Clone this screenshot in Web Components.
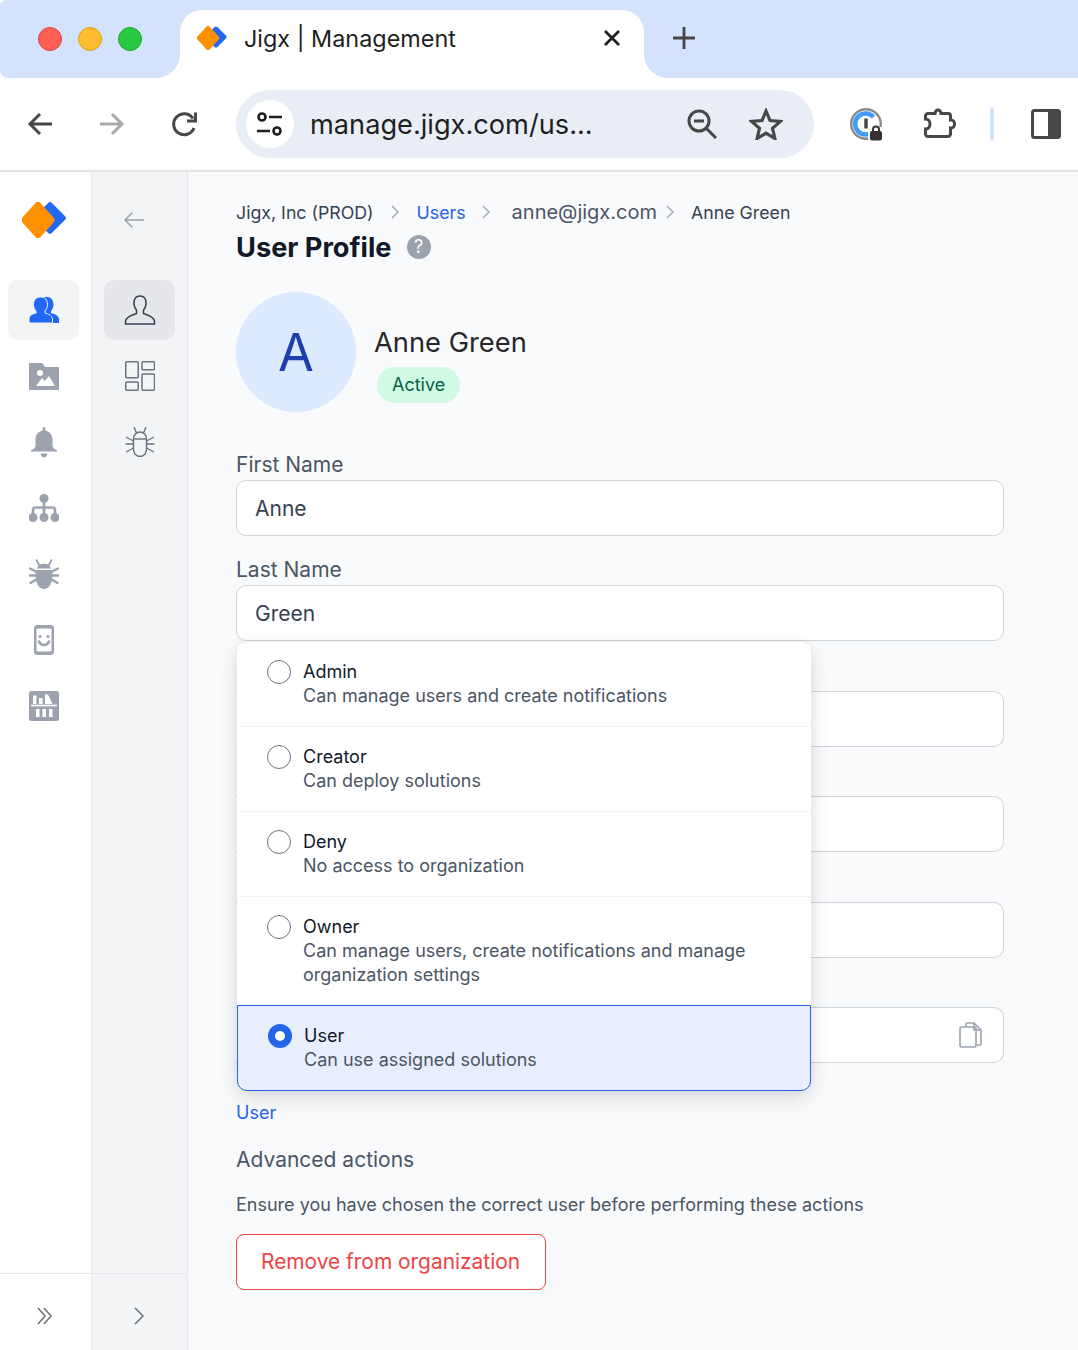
<!DOCTYPE html>
<html lang="en">
<head>
<meta charset="utf-8">
<title>Jigx | Management</title>
<style>
	html, body{
		margin: 0;
		height: 100%;
	}
	body{
		width: 1078px;
		height: 1350px;
		overflow: hidden;
		display: flex;
		flex-direction: column;
		font-family: Inter, "Liberation Sans", sans-serif;
		background: #fff;
	}
</style>
</head>
<body>

<browser-bar></browser-bar>

<app-shell>
	<side-rail slot="rail" footer="double">
		<svg slot="logo" width="44" height="36" viewBox="0 0 44 36">
			<rect x="-12" y="-12" width="24" height="24" rx="3" fill="#2268f5" transform="translate(28 16) rotate(45)"/>
			<rect x="-12.500" y="-12.500" width="25" height="25" rx="3" fill="#ff9000" transform="translate(16 18) scale(1 1.120) rotate(45)"/>
		</svg>
		<nav-item active>
			<svg width="30" height="26" viewBox="0 0 30 26" fill="#2268f5">
				<path d="M18 0c4 0 6.500 3 6.500 7.500 0 3-1 5-2.500 6.500v2c3 1 7.500 2 8 6v4H12V0z"/>
				<path d="M11.500 0C7 0 4.500 3 4.500 7.500c0 3 1 5 2.500 6.500v2c-3 1-7 2-7 6v4h23.500v-4c-.5-4-4.500-5-7.500-6v-2c1.500-1.500 2.500-3.500 2.500-6.500C18.500 3 16 0 11.500 0z" stroke="#f3f4f6" stroke-width="1"/>
			</svg>
		</nav-item>
		<nav-item>
			<svg width="30" height="27" viewBox="0 0 30 27">
				<path d="M1 0h11c1 0 1.500.5 2 1l2 3h13c.6 0 1 .4 1 1v21c0 .6-.4 1-1 1H1c-.6 0-1-.4-1-1V1c0-.6.4-1 1-1z" fill="#9ca3af"/>
				<circle cx="11" cy="10" r="3" fill="#fff"/>
				<path d="M7 23l6-8 3 3 4-5 6 10z" fill="#fff"/>
			</svg>
		</nav-item>
		<nav-item>
			<svg width="26" height="31" viewBox="0 0 26 31" fill="#9ca3af">
				<path d="M13 0c.8 0 1.300.6 1.300 1.400v2C19 4.200 21.500 8 21.500 12.500v6.500c0 1.500 1.500 3 4.500 4v1.500H0V23c3-1 4.500-2.500 4.500-4v-6.500c0-4.500 2.500-8.300 7.200-9.100v-2C11.700.6 12.200 0 13 0z"/>
				<path d="M9.500 26.500h7c-.5 2.500-2 4-3.500 4s-3-1.500-3.500-4z"/>
			</svg>
		</nav-item>
		<nav-item>
			<svg width="30" height="28" viewBox="0 0 30 28" fill="#9ca3af">
				<circle cx="15" cy="4.500" r="4.500"/><circle cx="4" cy="23.500" r="4.500"/><circle cx="15" cy="23.500" r="4.500"/><circle cx="26" cy="23.500" r="4.500"/>
				<path d="M15 8v12M4 20v-4c0-1.500 1-2.500 2.500-2.500h17c1.500 0 2.500 1 2.500 2.500v4" fill="none" stroke="#9ca3af" stroke-width="2.600"/>
			</svg>
		</nav-item>
		<nav-item>
			<svg width="30" height="30" viewBox="0 0 30 30" fill="#9ca3af">
				<path d="M8 0l3 5.500c2.500-1 5.500-1 8 0L22 0l1.500 1-3 6c.8.8 1.300 1.500 1.500 2.500H8c.2-1 .7-1.700 1.500-2.500l-3-6z"/>
				<path d="M7.500 11h15.200c.5 1.500.8 3 .8 5 0 8-3.500 14-8.500 14s-8.500-6-8.500-14c0-2 .2-3.500 1-5z"/>
				<path d="M1 9.500l6 3M0.500 16.500h6M1.500 24l6-3.500M29 9.500l-6 3M29.500 16.500h-6M28.500 24l-6-3.500" fill="none" stroke="#9ca3af" stroke-width="2.400" stroke-linecap="round"/>
			</svg>
		</nav-item>
		<nav-item>
			<svg width="20" height="30" viewBox="0 0 20 30">
				<rect width="20" height="30" rx="3.500" fill="#9ca3af"/>
				<rect x="2.500" y="3.500" width="15" height="23" rx="1" fill="#fff"/>
				<circle cx="6" cy="11.500" r="1.600" fill="#9ca3af"/><circle cx="14" cy="11.500" r="1.600" fill="#9ca3af"/>
				<path d="M5 16.500c1 2.500 3 3.500 5 3.500s4-1 5-3.500" fill="none" stroke="#9ca3af" stroke-width="2.500" stroke-linecap="round"/>
			</svg>
		</nav-item>
		<nav-item>
			<svg width="30" height="30" viewBox="0 0 30 30">
				<rect width="30" height="30" rx="2.500" fill="#9ca3af"/>
				<path d="M4 13V4.500h3.500V13zM10 13V7h3.500v6zM16 13V3.500h3l4.500 9.500z" fill="#fff"/>
				<path d="M2 14.500h26" stroke="#fff" stroke-width="1.600"/>
				<path d="M7 26v-8h3.500v8zM13.500 26v-8h3.500v8zM20 26v-8h3.500v8z" fill="#fff"/>
			</svg>
		</nav-item>
	</side-rail>

	<side-rail slot="subrail" footer="single" tone="sub">
		<svg slot="logo" width="22" height="18" viewBox="0 0 22 18" fill="none" stroke="#9ca3af" stroke-width="1.500" style="margin-left:-9px">
			<path d="M21 9H2M9.500 1.500L2 9l7.500 7.500"/>
		</svg>
		<nav-item active>
			<svg width="32" height="30" viewBox="0 0 32 30" fill="none" stroke="#374151" stroke-width="1.500">
				<path d="M16 1c-4 0-6 3-6 7 0 3 1 5.500 2.500 7v3.500c-3 1.500-10 2.500-11 7.500v3h29v-3c-1-5-8-6-11-7.500V15c1.500-1.500 2.500-4 2.500-7 0-4-2-7-6-7z"/>
			</svg>
		</nav-item>
		<nav-item>
			<svg width="30" height="30" viewBox="0 0 30 30" fill="none" stroke="#6b7280" stroke-width="1.500">
				<rect x=".75" y=".75" width="12.500" height="16" rx="1"/>
				<rect x="17" y=".75" width="12.500" height="8" rx="1"/>
				<rect x=".75" y="21" width="12.500" height="8.250" rx="1"/>
				<rect x="17" y="13" width="12.500" height="16.250" rx="1"/>
			</svg>
		</nav-item>
		<nav-item>
			<svg width="30" height="30" viewBox="0 0 30 30" fill="none" stroke="#6b7280" stroke-width="1.400">
				<path d="M9 0l2.500 6M21 0l-2.500 6"/>
				<path d="M8.500 12c0-4 3-7 6.500-7s6.500 3 6.500 7v10c0 4.500-3 7.500-6.500 7.500S8.500 26.500 8.500 22z"/>
				<path d="M8.500 12h13"/>
				<path d="M1 10l7.500 4M.5 17h8M1 25l7.500-4M29 10l-7.500 4M29.500 17h-8M29 25l-7.500-4"/>
			</svg>
		</nav-item>
	</side-rail>

	<profile-page>
		<crumb-trail slot="crumbs">
			<span style="color:#374151">Jigx, Inc (PROD)</span>
			<span style="color:#2563eb;margin-left:43px">Users</span>
			<span style="color:#4b5563;margin-left:46px;font-size:20px">anne@jigx.com</span>
			<span style="color:#374151;margin-left:34px">Anne Green</span>
		</crumb-trail>
	</profile-page>
</app-shell>

<script>
/**
 * @element browser-bar
 * The tab strip and the address bar on top of the page
 */
class BrowserBarElement extends HTMLElement{
	constructor() {
		super()
		let shadowRoot = this.attachShadow({mode: 'open'})
		shadowRoot.innerHTML = `
			<style>
				:host{
					display: block;
					flex: none;
					background: #fff;
					color: #1f1f1f;
					border-bottom: 2px solid #e3e3e3;
				}
				.strip{
					display: flex;
					height: 78px;
				}
				.left{
					width: 180px;
					display: flex;
					align-items: center;
					gap: 16px;
					padding: 0 0 0 38px;
					box-sizing: border-box;
					background: #d3e3fd;
					border-radius: 6px 0 24px 8px;
				}
				.left i{
					width: 24px;
					height: 24px;
					box-sizing: border-box;
					border-radius: 50%;
					border: 1px solid;
				}
				.tabwrap{
					width: 464px;
					background: #d3e3fd;
					padding-top: 10px;
					box-sizing: border-box;
				}
				.tab{
					height: 68px;
					background: #fff;
					border-radius: 22px 22px 0 0;
					display: flex;
					align-items: center;
					padding: 0 24px 12px 17px;
					box-sizing: border-box;
					font-size: 23.400px;
				}
				.tab span{
					margin-left: 17px;
					flex: 1;
				}
				.right{
					flex: 1;
					background: #d3e3fd;
					border-radius: 0 0 0 24px;
					padding: 27px 0 0 29px;
					box-sizing: border-box;
				}
				.tools{
					height: 92px;
					display: flex;
					align-items: center;
					padding-left: 27px;
				}
				.tools svg{
					flex: none;
					display: block;
				}
				.omni{
					width: 578px;
					height: 68px;
					margin: 0 36px 0 38px;
					border-radius: 34px;
					background: #e9eef6;
					display: flex;
					align-items: center;
					padding: 0 31px 0 10px;
					box-sizing: border-box;
				}
				.site{
					width: 48px;
					height: 48px;
					border-radius: 50%;
					background: #fff;
					display: flex;
					align-items: center;
					justify-content: center;
				}
				.url{
					font-size: 27.200px;
					margin-left: 16px;
					flex: 1;
					white-space: nowrap;
				}
			</style>
			<div class="strip">
				<div class="left">
					<i style="background:#ff5f57;border-color:#e0443e"></i>
					<i style="background:#febc2e;border-color:#dea123"></i>
					<i style="background:#28c840;border-color:#1aab29"></i>
				</div>
				<div class="tabwrap">
					<div class="tab">
						<svg width="30" height="26" viewBox="0 0 30 26">
							<rect x="-8" y="-8" width="16" height="16" rx="2" fill="#2268f5" transform="translate(19 12) rotate(45)"/>
							<rect x="-8.500" y="-8.500" width="17" height="17" rx="2" fill="#ff9000" transform="translate(11 13) scale(1 1.080) rotate(45)"/>
						</svg>
						<span>Jigx | Management</span>
						<svg width="16" height="16" viewBox="0 0 16 16" stroke="#1f1f1f" stroke-width="2.800"><path d="M1 1l14 14M15 1L1 15"/></svg>
					</div>
				</div>
				<div class="right">
					<svg width="22" height="22" viewBox="0 0 22 22" stroke="#474747" stroke-width="2.800"><path d="M11 0v22M0 11h22"/></svg>
				</div>
			</div>
			<div class="tools">
				<svg width="26" height="24" viewBox="0 0 26 24" fill="none" stroke="#474747" stroke-width="3"><path d="M25 12H3M13 2L3 12l10 10"/></svg>
				<svg width="26" height="24" viewBox="0 0 26 24" fill="none" stroke="#ababab" stroke-width="3" style="margin-left:46px"><path d="M1 12h22M13 2l10 10-10 10"/></svg>
				<svg width="26" height="26" viewBox="0 0 26 26" fill="none" stroke="#474747" stroke-width="3" style="margin-left:47px"><path d="M22 17a10.500 10.500 0 1 1-1-9.500"/><path d="M23.500 1.500v8.500H15" /></svg>
				<div class="omni">
					<div class="site">
						<svg width="26" height="24" viewBox="0 0 26 24" fill="none" stroke="#1f1f1f" stroke-width="2.600"><circle cx="5" cy="5" r="3.500"/><path d="M12 5h13M0 19h13"/><circle cx="20" cy="19" r="3.500"/></svg>
					</div>
					<div class="url">manage.jigx.com/us...</div>
					<svg width="30" height="30" viewBox="0 0 30 30" fill="none" stroke="#474747" stroke-width="3" style="margin-right:32px"><circle cx="12" cy="12" r="10"/><path d="M7 12h10M19 19l10 10"/></svg>
					<svg width="34" height="32" viewBox="0 0 34 32" fill="none" stroke="#474747" stroke-width="3.200"><path d="M17 3l4 9.500 10.500.9-8 6.900 2.400 10.200L17 25.200 8.100 30.500l2.400-10.200-8-6.900L13 12.500z"/></svg>
				</div>
				<svg width="34" height="34" viewBox="0 0 34 34" fill="none">
					<circle cx="16" cy="17" r="14.800" stroke="#8a8a8a" stroke-width="2.400"/>
					<path d="M23 24.500A10.500 10.500 0 1 1 23.500 10" stroke="#3f9bf7" stroke-width="4.500"/>
					<path d="M16 11.500v10" stroke="#474747" stroke-width="3.500"/>
					<rect x="18" y="20" width="16" height="14" rx="3" fill="#fff"/>
					<rect x="20" y="24" width="12" height="9.500" rx="2" fill="#333"/>
					<path d="M23 25v-2.500a3 3 0 0 1 6 0V25" stroke="#333" stroke-width="2"/>
				</svg>
				<svg width="34" height="32" viewBox="0 0 34 32" fill="none" stroke="#474747" stroke-width="3" style="margin-left:39px"><path d="M5 5.500h7c.3-2 1.500-3.500 3-3.500s2.700 1.500 3 3.500h7a2.500 2.500 0 0 1 2.500 2.500v4c3-.5 4 2 4 4s-1 4.500-4 4v6a2.500 2.500 0 0 1-2.500 2.500H5A2.500 2.500 0 0 1 2.500 26v-5c2.500 0 4.500-2 4.500-5s-2-5-4.500-5V8A2.500 2.500 0 0 1 5 5.500z"/></svg>
				<div style="width:4px;height:32px;background:#d3e3fd;border-radius:2px;margin-left:33px"></div>
				<svg width="30" height="30" viewBox="0 0 30 30" style="margin-left:37px"><rect x="1.500" y="1.500" width="27" height="27" rx="2" fill="#fff" stroke="#474747" stroke-width="3"/><path d="M17 1.500h10a1.500 1.500 0 0 1 1.500 1.500v24a1.500 1.500 0 0 1-1.500 1.500H17z" fill="#474747"/></svg>
			</div>
		`
	}
}
customElements.define("browser-bar", BrowserBarElement)

/**
 * @element app-shell
 * @slot rail
 * @slot subrail
 * @slot main content
 */
class AppShellElement extends HTMLElement{
	constructor() {
		super()
		let shadowRoot = this.attachShadow({mode: 'open'})
		shadowRoot.innerHTML = `
			<style>
				:host{
					display: flex;
					flex: 1;
					min-height: 0;
					background: #f9fafb;
				}
			</style>
			<slot name="rail"></slot>
			<slot name="subrail"></slot>
			<slot></slot>
		`
	}
}
customElements.define("app-shell", AppShellElement)

/**
 * @element side-rail
 * @slot logo
 * @attribute footer "double" or "single" chevron at the bottom
 * @attribute tone "sub" for the grey inner rail
 */
class SideRailElement extends HTMLElement{
	constructor() {
		super()
		let shadowRoot = this.attachShadow({mode: 'open'})
		let double = this.getAttribute("footer") == "double"
		shadowRoot.innerHTML = `
			<style>
				:host{
					display: flex;
					flex-direction: column;
					flex: none;
					box-sizing: border-box;
					width: 92px;
					height: 100%;
					background: #fff;
					border-right: 1px solid #e5e7eb;
				}
				:host([tone="sub"]){
					width: 96px;
					background: #f3f4f6;
				}
				.logo{
					height: 108px;
					display: flex;
					align-items: center;
					justify-content: center;
					box-sizing: border-box;
					padding: 0 3px 12px 0;
				}
				.list{
					flex: 1;
					display: flex;
					flex-direction: column;
					gap: 6px;
					padding: 0 12px 0 8px;
				}
				:host([tone="sub"]) .list{
					padding: 0 12px;
				}
				.foot{
					height: 77px;
					border-top: 1px solid #e5e7eb;
					display: flex;
					align-items: center;
					justify-content: center;
					padding: 7px 2px 0 0;
					box-sizing: border-box;
				}
				:host([tone="sub"]) .foot{
					padding-right: 0;
				}
			</style>
			<div class="logo"><slot name="logo"></slot></div>
			<div class="list"><slot></slot></div>
			<div class="foot">
				${double ?
					`<svg width="16" height="18" viewBox="0 0 16 18" fill="none" stroke="#6b7280" stroke-width="1.500"><path d="M1 1l7 8-7 8M7 1l7 8-7 8"/></svg>` :
					`<svg width="11" height="18" viewBox="0 0 11 18" fill="none" stroke="#6b7280" stroke-width="1.500"><path d="M1 1l8 8-8 8"/></svg>`}
			</div>
		`
	}
}
customElements.define("side-rail", SideRailElement)

/**
 * @element nav-item
 * @attribute active
 */
class NavItemElement extends HTMLElement{
	constructor() {
		super()
		let shadowRoot = this.attachShadow({mode: 'open'})
		shadowRoot.innerHTML = `
			<style>
				:host{
					display: flex;
					align-items: center;
					justify-content: center;
					height: 60px;
					border-radius: 10px;
					flex: none;
				}
				:host([active]){
					background: #f3f4f6;
				}
				:host-context(side-rail[tone="sub"]):host([active]){
					background: #e5e7eb;
				}
			</style>
			<slot></slot>
		`
	}
}
customElements.define("nav-item", NavItemElement)

/**
 * @element crumb-trail
 * Draws the separators itself, the spans come in by the slot
 */
class CrumbTrailElement extends HTMLElement{
	constructor() {
		super()
		let shadowRoot = this.attachShadow({mode: 'open'})
		let chevrons = [155, 246, 430].map(x => `
			<svg style="left:${x}px" width="8" height="14" viewBox="0 0 8 14" fill="none" stroke="#9ca3af" stroke-width="1.300"><path d="M1 1l6 6-6 6"/></svg>
		`).join("")
		shadowRoot.innerHTML = `
			<style>
				:host{
					display: flex;
					align-items: baseline;
					position: relative;
					height: 24px;
					font-size: 17.750px;
					line-height: 24px;
					white-space: nowrap;
				}
				svg{
					position: absolute;
					top: 5px;
				}
			</style>
			<slot></slot>
			${chevrons}
		`
	}
}
customElements.define("crumb-trail", CrumbTrailElement)

/**
 * @element form-field
 * @slot overlay what lies over the fields below this one
 * @slot after an icon at the end of the input
 * @attribute label
 * @attribute value
 * @attribute covered the list lies over its left side
 */
class FormFieldElement extends HTMLElement{
	constructor() {
		super()
		let shadowRoot = this.attachShadow({mode: 'open'})
		shadowRoot.innerHTML = `
			<style>
				:host{
					display: block;
					position: relative;
				}
				.label{
					height: 25px;
					font-size: 21px;
					line-height: 25px;
					color: #4b5563;
					margin-top: -3px;
					padding-bottom: 3px;
				}
				.input{
					height: 56px;
					box-sizing: border-box;
					border: 1px solid #d1d5db;
					border-radius: 10px;
					background: #fff;
					display: flex;
					align-items: center;
					justify-content: space-between;
					padding: 0 20px 0 18px;
					font-size: 21px;
					color: #374151;
				}
				:host([covered]) .input{
					border-left: 0;
					border-radius: 0 10px 10px 0;
				}
			</style>
			<div class="label">${this.getAttribute("label") || ""}</div>
			<div class="input">
				<span>${this.getAttribute("value") || ""}</span>
				<slot name="after"></slot>
			</div>
			<slot name="overlay"></slot>
		`
	}
}
customElements.define("form-field", FormFieldElement)

/**
 * @element role-option
 * @attribute name
 * @attribute info
 * @attribute selected
 */
class RoleOptionElement extends HTMLElement{
	constructor() {
		super()
		let shadowRoot = this.attachShadow({mode: 'open'})
		shadowRoot.innerHTML = `
			<style>
				:host{
					display: flex;
					gap: 12px;
					box-sizing: border-box;
					padding: 18px 30px;
					border-bottom: 1px solid #f3f4f6;
					font-size: 18px;
					line-height: 24px;
				}
				:host([selected]){
					background: #e8eefd;
					border: 1px solid #2563eb;
					border-radius: 0 0 10px 10px;
					margin-top: -1px;
				}
				.radio{
					flex: none;
					width: 24px;
					height: 24px;
					box-sizing: border-box;
					border-radius: 50%;
					border: 1px solid #6b7280;
					background: #fff;
				}
				:host([selected]) .radio{
					border: 7.500px solid #2563eb;
				}
				.name{
					color: #111827;
				}
				.info{
					color: #4b5563;
				}
			</style>
			<div class="radio"></div>
			<div>
				<div class="name">${this.getAttribute("name")}</div>
				<div class="info">${this.getAttribute("info")}</div>
			</div>
		`
	}
}
customElements.define("role-option", RoleOptionElement)

/**
 * @element role-menu
 * The open list, it hangs under the field it is slotted in
 */
class RoleMenuElement extends HTMLElement{
	constructor() {
		super()
		let shadowRoot = this.attachShadow({mode: 'open'})
		shadowRoot.innerHTML = `
			<style>
				:host{
					position: absolute;
					top: calc(100% + 1px);
					left: 1px;
					width: 574px;
					display: block;
					background: #fff;
					border-radius: 10px;
					box-shadow: 0 8px 22px -2px rgba(0, 0, 0, .14), 0 0 10px rgba(0, 0, 0, .05);
					z-index: 2;
				}
			</style>
			<slot></slot>
		`
	}
}
customElements.define("role-menu", RoleMenuElement)

/**
 * @element profile-page
 * @slot crumbs
 */
class ProfilePageElement extends HTMLElement{
	constructor() {
		super()
		let shadowRoot = this.attachShadow({mode: 'open'})
		shadowRoot.innerHTML = `
			<style>
				:host{
					display: block;
					flex: 1;
					min-width: 0;
					padding: 28px 74px 0 48px;
					color: #374151;
				}
				.title{
					display: flex;
					align-items: center;
					gap: 15px;
					height: 40px;
					margin-top: 3px;
					font-size: 27.200px;
					font-weight: 700;
					color: #111827;
				}
				.help{
					width: 24px;
					height: 24px;
					border-radius: 50%;
					background: #9ca3af;
					color: #fff;
					font-size: 18px;
					font-weight: 400;
					text-align: center;
					line-height: 24px;
				}
				.who{
					display: flex;
					align-items: center;
					gap: 18px;
					margin-top: 25px;
				}
				.avatar{
					width: 120px;
					height: 120px;
					border-radius: 50%;
					background: #dbeafe;
					color: #1e40af;
					font-size: 52px;
					display: flex;
					align-items: center;
					justify-content: center;
				}
				.name{
					font-size: 27.300px;
					line-height: 36px;
					color: #27272a;
					padding-top: 24px;
				}
				.badge{
					display: inline-block;
					margin: 6px 0 0 3px;
					padding: 0 15px;
					height: 36px;
					line-height: 36px;
					border-radius: 18px;
					background: #d1fae5;
					color: #065f46;
					font-size: 18px;
				}
				.fields{
					display: grid;
					grid-auto-rows: 81px;
					row-gap: 24.400px;
					margin-top: 43px;
				}
				.role{
					font-size: 18px;
					line-height: 24px;
					color: #2563eb;
					margin-top: 38px;
				}
				h2{
					margin: 22px 0 0;
					font-size: 21px;
					line-height: 26px;
					font-weight: 400;
					color: #4b5563;
				}
				p{
					margin: 20px 0 0;
					font-size: 18px;
					line-height: 24px;
					color: #4b5563;
				}
				.remove{
					display: inline-flex;
					align-items: center;
					box-sizing: border-box;
					height: 56px;
					margin-top: 17px;
					padding: 0 25px 0 24px;
					border: 1px solid #ef4444;
					border-radius: 8px;
					background: #fff;
					color: #ef4444;
					font-size: 20.900px;
				}
			</style>
			<slot name="crumbs"></slot>
			<div class="title">User Profile <span class="help">?</span></div>
			<div class="who">
				<div class="avatar">A</div>
				<div>
					<div class="name">Anne Green</div>
					<span class="badge">Active</span>
				</div>
			</div>
			<div class="fields">
				<form-field label="First Name" value="Anne"></form-field>
				<form-field label="Last Name" value="Green">
					<role-menu slot="overlay">
						<role-option name="Admin" info="Can manage users and create notifications"></role-option>
						<role-option name="Creator" info="Can deploy solutions"></role-option>
						<role-option name="Deny" info="No access to organization"></role-option>
						<role-option name="Owner" info="Can manage users, create notifications and manage organization settings"></role-option>
						<role-option name="User" info="Can use assigned solutions" selected></role-option>
					</role-menu>
				</form-field>
				<form-field covered></form-field>
				<form-field covered></form-field>
				<form-field covered></form-field>
				<form-field covered>
					<svg slot="after" width="24" height="26" viewBox="0 0 24 26" fill="none" stroke="#9ca3af" stroke-width="1.600">
						<path d="M7 5V2c0-.6.4-1 1-1h7l7 7v14c0 .6-.4 1-1 1h-4"/>
						<path d="M15 1v7h7"/>
						<rect x="1" y="5" width="16" height="20" rx="1.500"/>
					</svg>
				</form-field>
			</div>
			<div class="role">User</div>
			<h2>Advanced actions</h2>
			<p>Ensure you have chosen the correct user before performing these actions</p>
			<div class="remove">Remove from organization</div>
		`
	}
}
customElements.define("profile-page", ProfilePageElement)
</script>
</body>
</html>
